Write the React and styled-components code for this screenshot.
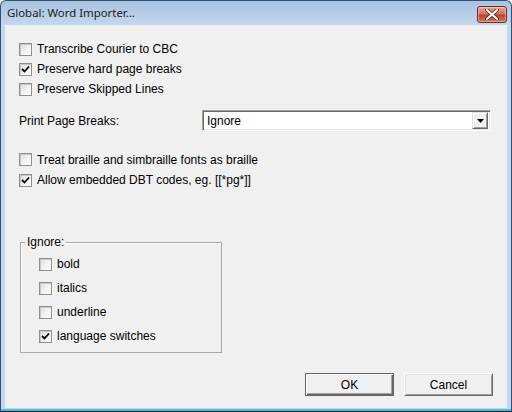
import React from "react";
import styled, { createGlobalStyle } from "styled-components";

const GlobalStyle = createGlobalStyle`
  html, body {
    margin: 0;
    padding: 0;
    background: #ffffff;
  }
  * {
    box-sizing: border-box;
  }
`;

function Check({ checked }) {
  return (
    <CheckBox>
      {checked && (
        <svg width="9" height="9" viewBox="0 0 9 9">
          <path d="M1 4 L3.5 6.5 L8 1.5" fill="none" stroke="#000" strokeWidth="1.8" />
        </svg>
      )}
    </CheckBox>
  );
}

function App() {
  const topOptions = [
    { label: "Transcribe Courier to CBC", checked: false },
    { label: "Preserve hard page breaks", checked: true },
    { label: "Preserve Skipped Lines", checked: false },
  ];
  const brailleOptions = [
    { label: "Treat braille and simbraille fonts as braille", checked: false },
    { label: "Allow embedded DBT codes, eg. [[*pg*]]", checked: true },
  ];
  const ignoreOptions = [
    { label: "bold", checked: false },
    { label: "italics", checked: false },
    { label: "underline", checked: false },
    { label: "language switches", checked: true },
  ];

  return (
    <>
      <GlobalStyle />
      <Window>
        <TitleBar>
          <Title>Global: Word Importer...</Title>
          <CloseButton>
            <svg width="14" height="11" viewBox="0 0 14 11">
              <path
                d="M2 1 L12 10 M12 1 L2 10"
                stroke="#5a1a10"
                strokeWidth="3.6"
                strokeLinecap="round"
              />
              <path
                d="M2 1 L12 10 M12 1 L2 10"
                stroke="#ffffff"
                strokeWidth="2.2"
                strokeLinecap="round"
              />
            </svg>
          </CloseButton>
        </TitleBar>
        <Body>
          <Group>
            {topOptions.map((o, i) => (
              <CheckRow key={i}>
                <Check checked={o.checked} />
                <span>{o.label}</span>
              </CheckRow>
            ))}
          </Group>
          <SelectRow>
            <span>Print Page Breaks:</span>
            <Select>
              <SelectValue>Ignore</SelectValue>
              <DropButton>
                <svg width="7" height="4" viewBox="0 0 7 4">
                  <path d="M0 0 H7 L3.5 4 Z" fill="#000" />
                </svg>
              </DropButton>
            </Select>
          </SelectRow>
          <Group $top={18}>
            {brailleOptions.map((o, i) => (
              <CheckRow key={i} $height={i === 0 ? 21 : 20}>
                <Check checked={o.checked} />
                <span>{o.label}</span>
              </CheckRow>
            ))}
          </Group>
          <IgnoreBox>
            <Legend>Ignore:</Legend>
            {ignoreOptions.map((o, i) => (
              <CheckRow key={i} $height={24} $indent={14}>
                <Check checked={o.checked} />
                <span>{o.label}</span>
              </CheckRow>
            ))}
          </IgnoreBox>
          <ButtonRow>
            <Button $default>OK</Button>
            <Button>Cancel</Button>
          </ButtonRow>
        </Body>
      </Window>
    </>
  );
}

export default App;

const Window = styled.div`
  width: 512px;
  height: 412px;
  display: flex;
  flex-direction: column;
  padding: 0 4px 3px 4px;
  border: 1px solid #34506f;
  border-bottom-color: #101010;
  border-radius: 6px 6px 0 0;
  background: linear-gradient(
    to bottom,
    #a8c2e2 0,
    #c3d7ee 24px,
    #c3d7ee calc(100% - 2px),
    #46c0e4 calc(100% - 2px)
  );
  font-family: "Liberation Sans", Arial, sans-serif;
  font-size: 12px;
  color: #000;
`;

const TitleBar = styled.div`
  height: 24px;
  flex: none;
  display: flex;
  align-items: center;
  justify-content: space-between;
  padding-left: 2px;
`;

const Title = styled.div`
  font-family: "Noto Sans", "Open Sans", sans-serif;
  font-size: 11.4px;
  color: #1a1a1a;
  margin-top: -1px;
`;

const CloseButton = styled.div`
  width: 30px;
  height: 17px;
  margin-top: 2px;
  display: flex;
  align-items: center;
  justify-content: center;
  border: 1px solid #6b2b22;
  border-radius: 3px;
  background: linear-gradient(to bottom, #e8a89a 0, #d0735f 45%, #c2412a 55%, #d27a58 100%);
  box-shadow: inset 0 0 0 1px rgba(255, 220, 210, 0.5);
`;

const Body = styled.div`
  flex: 1;
  display: flex;
  flex-direction: column;
  background: #f0f0f0;
  padding: 14px 14px 12px 14px;
`;

const Group = styled.div`
  display: flex;
  flex-direction: column;
  margin-top: ${(p) => p.$top || 0}px;
`;

const CheckRow = styled.div`
  height: ${(p) => p.$height || 20}px;
  display: flex;
  align-items: center;
  gap: 5px;
  margin-left: ${(p) => p.$indent || 0}px;
  white-space: nowrap;
`;

const CheckBox = styled.div`
  width: 13px;
  height: 13px;
  flex: none;
  display: flex;
  align-items: center;
  justify-content: center;
  border: 1px solid #8e8f8f;
  background: linear-gradient(135deg, #dedede 0, #f4f4f4 60%, #ffffff 100%);
  box-shadow: inset 1px 1px 0 #c8c8c8;
`;

const SelectRow = styled.div`
  display: grid;
  grid-template-columns: 183px 289px;
  align-items: center;
  margin-top: 11px;
`;

const Select = styled.div`
  height: 21px;
  display: flex;
  align-items: center;
  justify-content: space-between;
  background: #fff;
  border: 1px solid;
  border-color: #a0a0a0 #ffffff #ffffff #a0a0a0;
  box-shadow: inset 1px 1px 0 #696969, inset -1px -1px 0 #e3e3e3;
  padding: 2px 2px 2px 3px;
`;

const SelectValue = styled.span`
  padding-left: 1px;
`;

const DropButton = styled.div`
  width: 16px;
  height: 17px;
  display: flex;
  align-items: center;
  justify-content: center;
  background: #f0f0f0;
  border: 1px solid;
  border-color: #e3e3e3 #696969 #696969 #e3e3e3;
  box-shadow: inset 1px 1px 0 #ffffff, inset -1px -1px 0 #a0a0a0;
`;

const IgnoreBox = styled.fieldset`
  width: 202px;
  margin: 45px 0 0 1px;
  padding: 3px 0 4px 4px;
  border: 1px solid #a8a8a8;
  box-shadow: 1px 1px 0 #ffffff inset;
  display: flex;
  flex-direction: column;
`;

const Legend = styled.legend`
  padding: 0 2px;
  line-height: 14px;
`;

const ButtonRow = styled.div`
  margin-top: auto;
  display: flex;
  justify-content: flex-end;
  gap: 10px;
`;

const Button = styled.div`
  width: 89px;
  height: 23px;
  display: flex;
  align-items: center;
  justify-content: center;
  background: #f0f0f0;
  border: 1px solid;
  border-color: ${(p) => (p.$default ? "#646464" : "#ffffff #696969 #696969 #ffffff")};
  box-shadow: ${(p) =>
    p.$default
      ? "inset 1px 1px 0 #ffffff, inset -1px -1px 0 #696969, inset -2px -2px 0 #a0a0a0"
      : "inset 1px 1px 0 #e3e3e3, inset -1px -1px 0 #a0a0a0"};
`;
